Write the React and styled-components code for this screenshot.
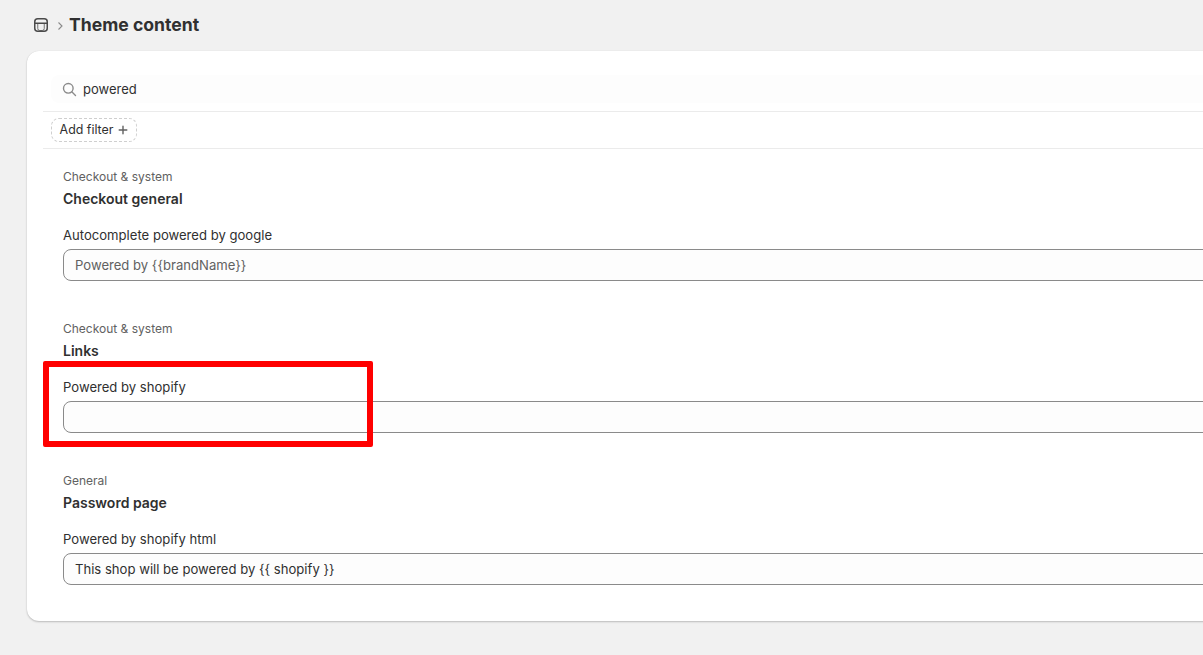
import React from "react";
import styled, { createGlobalStyle } from "styled-components";

const Global = createGlobalStyle`
  html, body { margin: 0; padding: 0; background: #f1f1f1; overflow: hidden; }
  body { font-family: Inter, "Noto Sans", sans-serif; color: #303030; font-size: 13px; }
`;

const Page = styled.div`
  width: 1203px;
  height: 655px;
  overflow: hidden;
  padding-left: 27px;
  box-sizing: border-box;
`;

const Header = styled.header`
  height: 51px;
  padding-bottom: 2px;
  display: flex;
  align-items: center;
  gap: 5px;
  padding-left: 6px;
  box-sizing: border-box;
`;

const Title = styled.h1`
  margin: 0;
  font-size: 17.6px;
  font-weight: 650;
  line-height: 24px;
  color: #303030;
`;

const Chevron = styled.svg`
  width: 10px;
  height: 10px;
  margin-top: 2px;
  margin-left: 1px;
  margin-right: -1px;
  color: #8a8a8a;
`;

const Card = styled.main`
  position: relative;
  width: 1220px;
  height: 570px;
  box-sizing: border-box;
  background: #fff;
  border-radius: 12px;
  box-shadow: 0 1px 2px rgba(0, 0, 0, 0.22), 0 0 1px rgba(0, 0, 0, 0.1);
  padding: 24px 0 0 16px;
`;

const SearchBar = styled.div`
  height: 28px;
  margin: 0 0 8px 8px;
  display: flex;
  align-items: center;
  gap: 6px;
  padding-left: 11px;
  background: #fdfdfd;
  border-radius: 8px;
  font-size: 13px;
  line-height: 20px;
`;

const Divider = styled.div`
  height: 1px;
  background: #ebebeb;
`;

const FilterRow = styled.div`
  height: 36px;
  display: flex;
  align-items: center;
  padding-left: 8px;
  box-sizing: border-box;
`;

const FilterChip = styled.button`
  height: 24px;
  width: 86px;
  box-sizing: border-box;
  border: 1px dashed #cfcfcf;
  border-radius: 8px;
  background: #fff;
  display: flex;
  align-items: center;
  justify-content: center;
  gap: 5px;
  padding: 0;
  font: 400 12.4px/16px Inter, sans-serif;
  color: #303030;
`;

const Sections = styled.div`
  padding: 20px 0 0 20px;
`;

const Section = styled.section`
  height: 152px;
`;

const Eyebrow = styled.div`
  font-size: 12px;
  line-height: 16px;
  color: #616161;
`;

const SectionTitle = styled.h2`
  margin: 4px 0 0;
  font-size: 14px;
  font-weight: 600;
  line-height: 20px;
  color: #303030;
`;

const FieldLabel = styled.label`
  display: block;
  margin-top: 16px;
  font-size: 13.1px;
  line-height: 20px;
  color: #303030;
`;

const TextField = styled.div`
  height: 32px;
  margin-top: 4px;
  box-sizing: border-box;
  border: 1px solid #8a8a8a;
  border-radius: 8px;
  background: #fdfdfd;
  padding-left: 11px;
  display: flex;
  align-items: center;
  font-size: 13.1px;
  line-height: 20px;
  color: ${(p) => (p.$placeholder ? "#616161" : "#303030")};
`;

const Highlight = styled.div`
  position: absolute;
  left: 16px;
  top: 310px;
  width: 330px;
  height: 86px;
  box-sizing: border-box;
  border: 6px solid #ff0000;
  border-radius: 2px;
  pointer-events: none;
`;

const sections = [
  { group: "Checkout & system", title: "Checkout general", label: "Autocomplete powered by google", value: "Powered by {{brandName}}", placeholder: true },
  { group: "Checkout & system", title: "Links", label: "Powered by shopify", value: "" },
  { group: "General", title: "Password page", label: "Powered by shopify html", value: "This shop will be powered by {{ shopify }}" },
];

export default function App() {
  return (
    <Page>
      <Global />
      <Header>
        <svg width="16" height="16" viewBox="0 0 16 16" fill="none" stroke="#4a4a4a" strokeWidth="1.5">
          <rect x="1.75" y="1.75" width="12.5" height="12.5" rx="3" />
          <path d="M1.75 6.25h12.5" />
          <path d="M4.75 6.5v5a2 2 0 0 0 2 2h2.5a2 2 0 0 0 2-2v-5" strokeWidth="1" strokeOpacity="0.75" />
        </svg>
        <Chevron viewBox="0 0 10 10" fill="none" stroke="currentColor" strokeWidth="1.1">
          <path d="M3.5 1.5 7 5 3.5 8.5" />
        </Chevron>
        <Title>Theme content</Title>
      </Header>
      <Card>
        <SearchBar>
          <svg width="15" height="15" viewBox="0 0 15 15" fill="none" stroke="#8a8a8a" strokeWidth="1.4" strokeLinecap="round">
            <circle cx="6.3" cy="6.3" r="4.8" />
            <path d="m10 10 3.5 3.5" />
          </svg>
          powered
        </SearchBar>
        <Divider />
        <FilterRow>
          <FilterChip>
            Add filter
            <svg width="10" height="10" viewBox="0 0 10 10" stroke="#616161" strokeWidth="1.4" strokeLinecap="round">
              <path d="M5 1.2v7.6M1.2 5h7.6" />
            </svg>
          </FilterChip>
        </FilterRow>
        <Divider />
        <Sections>
          {sections.map((s) => (
            <Section key={s.label}>
              <Eyebrow>{s.group}</Eyebrow>
              <SectionTitle>{s.title}</SectionTitle>
              <FieldLabel>{s.label}</FieldLabel>
              <TextField $placeholder={s.placeholder}>{s.value}</TextField>
            </Section>
          ))}
        </Sections>
        <Highlight />
      </Card>
    </Page>
  );
}
